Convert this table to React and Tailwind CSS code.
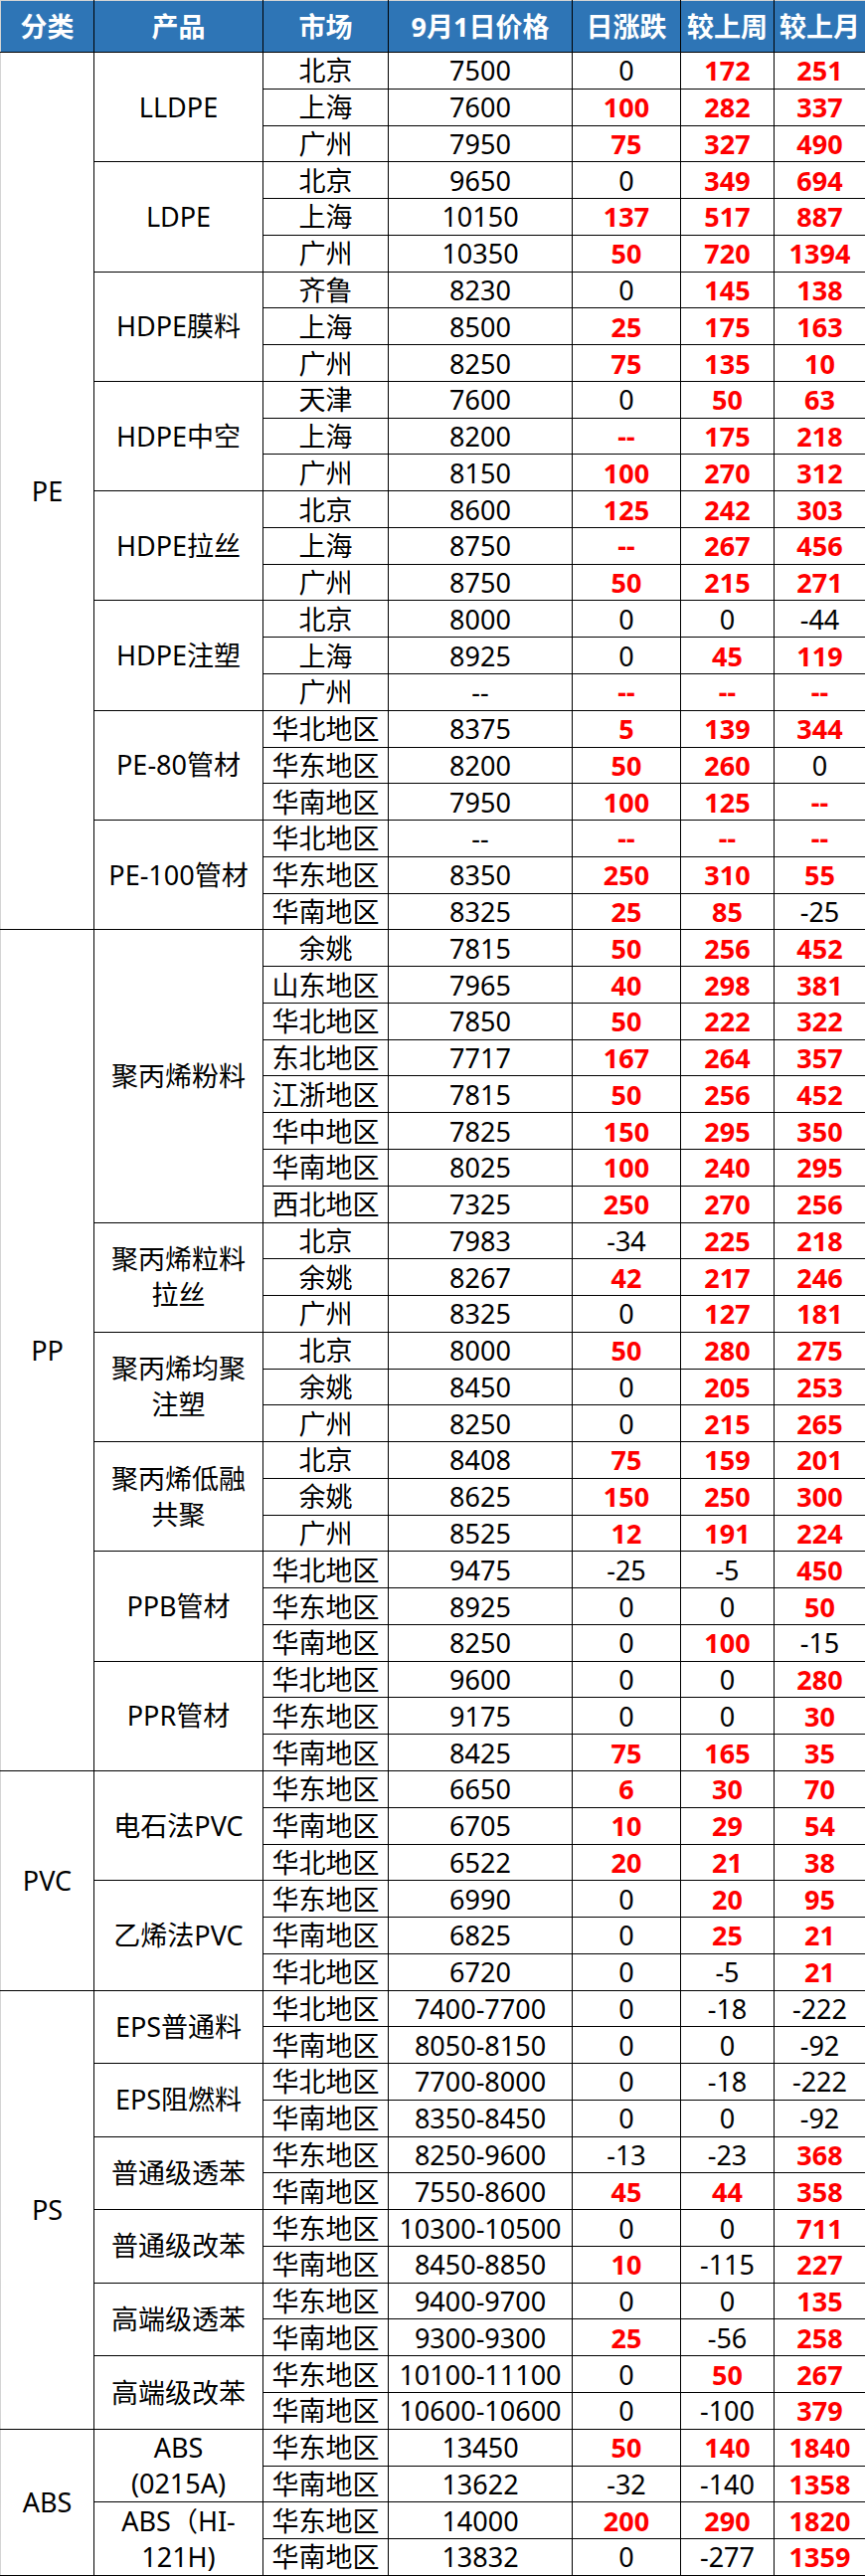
import React from "react";

const groups = [
  {
    cat: "PE",
    items: [
      { name: ["LLDPE"], rows: [["北京", "7500", "0", "172", "251"], ["上海", "7600", "100", "282", "337"], ["广州", "7950", "75", "327", "490"]] },
      { name: ["LDPE"], rows: [["北京", "9650", "0", "349", "694"], ["上海", "10150", "137", "517", "887"], ["广州", "10350", "50", "720", "1394"]] },
      { name: ["HDPE膜料"], rows: [["齐鲁", "8230", "0", "145", "138"], ["上海", "8500", "25", "175", "163"], ["广州", "8250", "75", "135", "10"]] },
      { name: ["HDPE中空"], rows: [["天津", "7600", "0", "50", "63"], ["上海", "8200", "--", "175", "218"], ["广州", "8150", "100", "270", "312"]] },
      { name: ["HDPE拉丝"], rows: [["北京", "8600", "125", "242", "303"], ["上海", "8750", "--", "267", "456"], ["广州", "8750", "50", "215", "271"]] },
      { name: ["HDPE注塑"], rows: [["北京", "8000", "0", "0", "-44"], ["上海", "8925", "0", "45", "119"], ["广州", "--", "--", "--", "--"]] },
      { name: ["PE-80管材"], rows: [["华北地区", "8375", "5", "139", "344"], ["华东地区", "8200", "50", "260", "0"], ["华南地区", "7950", "100", "125", "--"]] },
      { name: ["PE-100管材"], rows: [["华北地区", "--", "--", "--", "--"], ["华东地区", "8350", "250", "310", "55"], ["华南地区", "8325", "25", "85", "-25"]] },
    ],
  },
  {
    cat: "PP",
    items: [
      {
        name: ["聚丙烯粉料"],
        rows: [
          ["余姚", "7815", "50", "256", "452"],
          ["山东地区", "7965", "40", "298", "381"],
          ["华北地区", "7850", "50", "222", "322"],
          ["东北地区", "7717", "167", "264", "357"],
          ["江浙地区", "7815", "50", "256", "452"],
          ["华中地区", "7825", "150", "295", "350"],
          ["华南地区", "8025", "100", "240", "295"],
          ["西北地区", "7325", "250", "270", "256"],
        ],
      },
      { name: ["聚丙烯粒料", "拉丝"], rows: [["北京", "7983", "-34", "225", "218"], ["余姚", "8267", "42", "217", "246"], ["广州", "8325", "0", "127", "181"]] },
      { name: ["聚丙烯均聚", "注塑"], rows: [["北京", "8000", "50", "280", "275"], ["余姚", "8450", "0", "205", "253"], ["广州", "8250", "0", "215", "265"]] },
      { name: ["聚丙烯低融", "共聚"], rows: [["北京", "8408", "75", "159", "201"], ["余姚", "8625", "150", "250", "300"], ["广州", "8525", "12", "191", "224"]] },
      { name: ["PPB管材"], rows: [["华北地区", "9475", "-25", "-5", "450"], ["华东地区", "8925", "0", "0", "50"], ["华南地区", "8250", "0", "100", "-15"]] },
      { name: ["PPR管材"], rows: [["华北地区", "9600", "0", "0", "280"], ["华东地区", "9175", "0", "0", "30"], ["华南地区", "8425", "75", "165", "35"]] },
    ],
  },
  {
    cat: "PVC",
    items: [
      { name: ["电石法PVC"], rows: [["华东地区", "6650", "6", "30", "70"], ["华南地区", "6705", "10", "29", "54"], ["华北地区", "6522", "20", "21", "38"]] },
      { name: ["乙烯法PVC"], rows: [["华东地区", "6990", "0", "20", "95"], ["华南地区", "6825", "0", "25", "21"], ["华北地区", "6720", "0", "-5", "21"]] },
    ],
  },
  {
    cat: "PS",
    items: [
      { name: ["EPS普通料"], rows: [["华北地区", "7400-7700", "0", "-18", "-222"], ["华南地区", "8050-8150", "0", "0", "-92"]] },
      { name: ["EPS阻燃料"], rows: [["华北地区", "7700-8000", "0", "-18", "-222"], ["华南地区", "8350-8450", "0", "0", "-92"]] },
      { name: ["普通级透苯"], rows: [["华东地区", "8250-9600", "-13", "-23", "368"], ["华南地区", "7550-8600", "45", "44", "358"]] },
      { name: ["普通级改苯"], rows: [["华东地区", "10300-10500", "0", "0", "711"], ["华南地区", "8450-8850", "10", "-115", "227"]] },
      { name: ["高端级透苯"], rows: [["华东地区", "9400-9700", "0", "0", "135"], ["华南地区", "9300-9300", "25", "-56", "258"]] },
      { name: ["高端级改苯"], rows: [["华东地区", "10100-11100", "0", "50", "267"], ["华南地区", "10600-10600", "0", "-100", "379"]] },
    ],
  },
  {
    cat: "ABS",
    items: [
      { name: ["ABS", "(0215A)"], rows: [["华东地区", "13450", "50", "140", "1840"], ["华南地区", "13622", "-32", "-140", "1358"]] },
      { name: ["ABS（HI-", "121H)"], rows: [["华东地区", "14000", "200", "290", "1820"], ["华南地区", "13832", "0", "-277", "1359"]] },
    ],
  },
];

const headers = ["分类", "产品", "市场", "9月1日价格", "日涨跌", "较上周", "较上月"];

const isUp = (v) => v === "--" || (!v.startsWith("-") && v !== "0");

const cell = "border border-black text-center align-middle p-0";

const Change = ({ v }) => (
  <td className={`${cell} ${isUp(v) ? "text-[#ff0000] font-bold" : "text-black"}`}>{v}</td>
);

export default function App() {
  return (
    <div className="w-[870px] bg-white">
      <table className="w-[870px] table-fixed border-collapse text-[27px] leading-none text-black font-['Noto_Sans','Noto_Sans_CJK_SC',sans-serif]">
        <colgroup>
          <col className="w-[94px]" />
          <col className="w-[170px]" />
          <col className="w-[126px]" />
          <col className="w-[185px]" />
          <col className="w-[109px]" />
          <col className="w-[94px]" />
          <col className="w-[92px]" />
        </colgroup>
        <thead>
          <tr className="h-[52px] bg-[#2e75b6]">
            {headers.map((h, i) => (
              <th
                key={h}
                className={`border border-black border-t-[#d4d4d4] text-white font-bold text-center align-middle p-0 ${
                  i === 0 ? "border-l-[#d4d4d4]" : ""
                }`}
              >
                {h}
              </th>
            ))}
          </tr>
        </thead>
        <tbody>
          {groups.map((g) => {
            const total = g.items.reduce((n, it) => n + it.rows.length, 0);
            return g.items.map((it, ii) =>
              it.rows.map((r, ri) => (
                <tr key={g.cat + ii + ri} className="h-[36.77px]">
                  {ii === 0 && ri === 0 && (
                    <td rowSpan={total} className={`${cell} border-l-[#d4d4d4]`}>
                      {g.cat}
                    </td>
                  )}
                  {ri === 0 && (
                    <td rowSpan={it.rows.length} className={`${cell} leading-[36px]`}>
                      {it.name.map((line, li) => (
                        <div key={li}>{line}</div>
                      ))}
                    </td>
                  )}
                  <td className={cell}>{r[0]}</td>
                  <td className={cell}>{r[1]}</td>
                  <Change v={r[2]} />
                  <Change v={r[3]} />
                  <Change v={r[4]} />
                </tr>
              ))
            );
          })}
        </tbody>
      </table>
    </div>
  );
}
